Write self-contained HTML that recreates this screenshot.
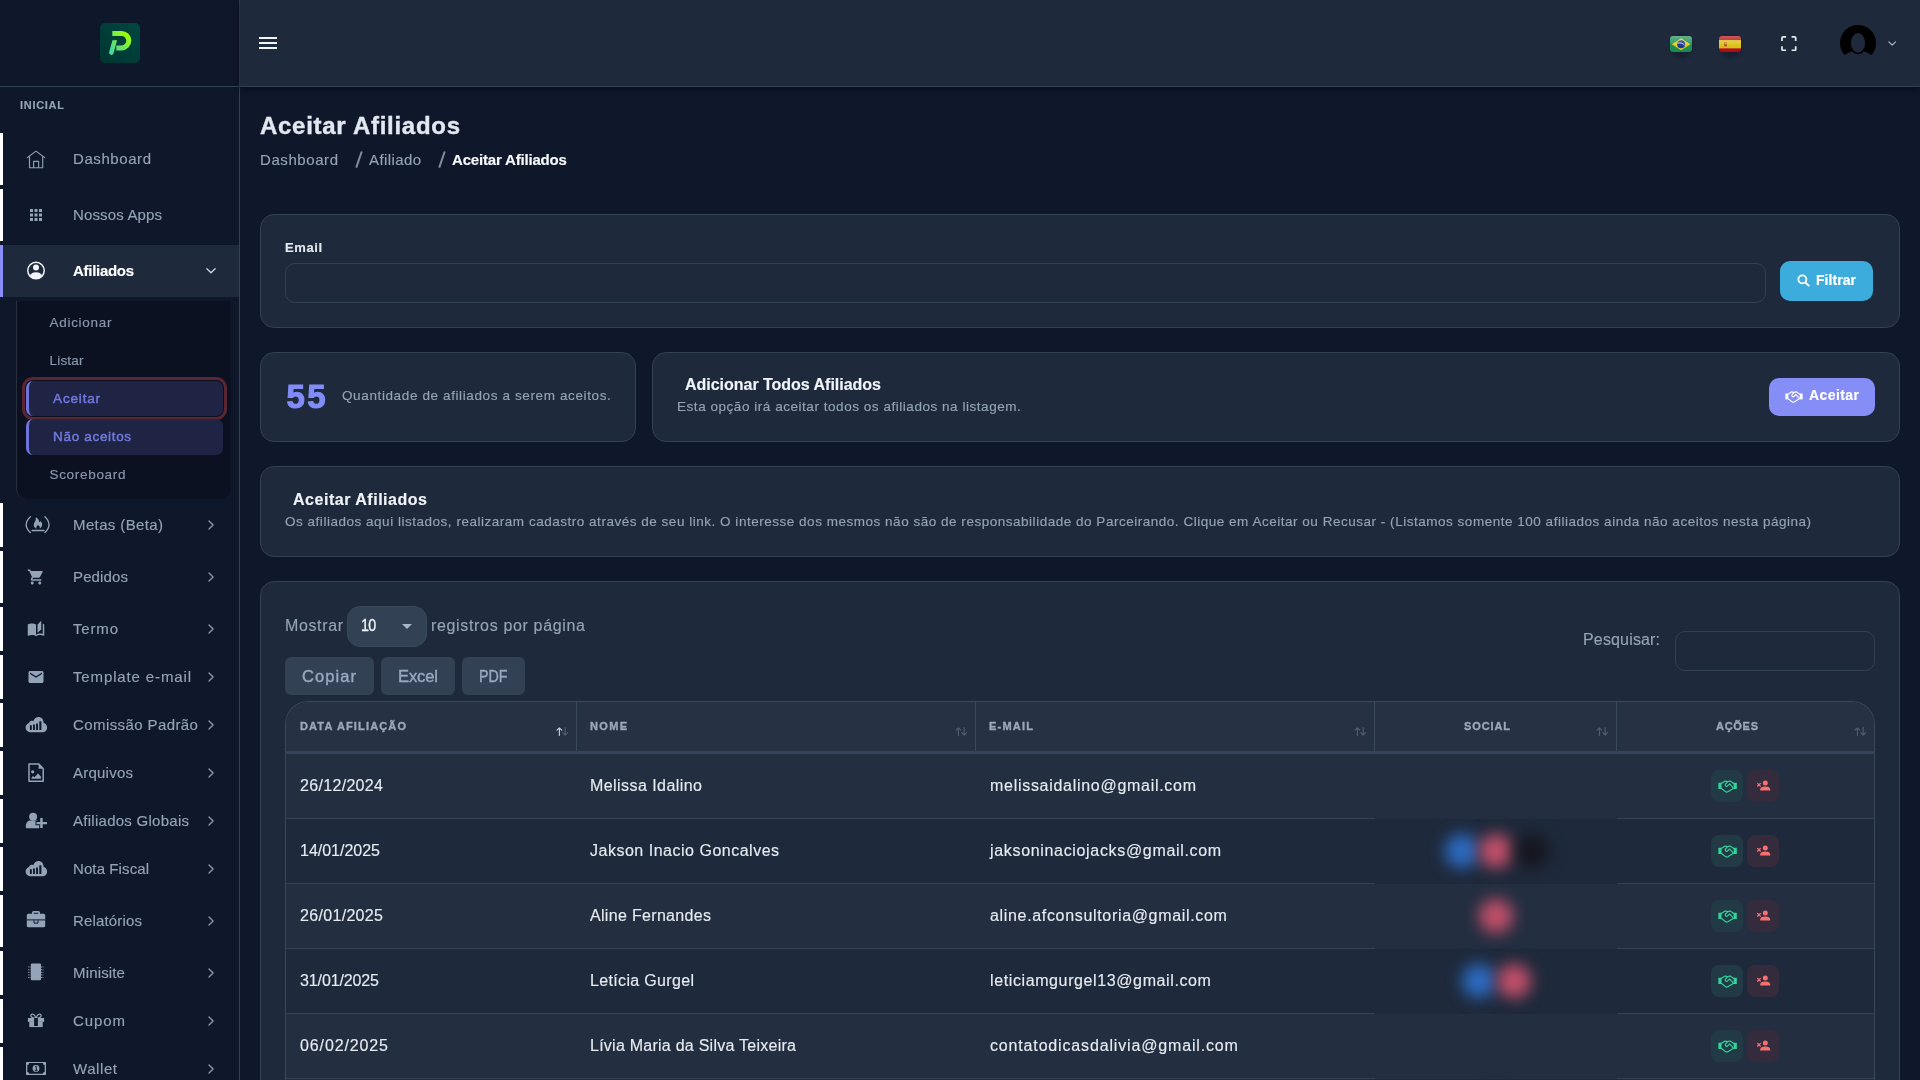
<!DOCTYPE html>
<html lang="pt-BR"><head>
<meta charset="utf-8">
<title>Aceitar Afiliados</title>
<style>
*{box-sizing:border-box;margin:0;padding:0}
html,body{width:1920px;height:1080px;overflow:hidden;background:#0f172a;font-family:"Liberation Sans",sans-serif;color:#94a3b8}
.t{position:absolute;white-space:nowrap;line-height:1}
#side,#head,#main{will-change:transform}
#main{position:absolute;left:0;top:0;width:1920px;height:1080px;overflow:hidden}
body{-webkit-font-smoothing:antialiased;-webkit-text-stroke:.15px}
b,.b{font-weight:bold}
/* sidebar */
#side{position:absolute;left:0;top:0;width:240px;height:1080px;background:#0f172a;border-right:1px solid #334155;overflow:hidden}
#sidehead{position:absolute;left:0;top:0;width:239px;height:87px;border-bottom:1px solid #334155}
#logo{position:absolute;left:100px;top:23px;width:40px;height:40px;border-radius:5px;background:linear-gradient(45deg,#003531,#004740)}
.mi{position:absolute;left:0;width:239px;height:44px;border-left:3px solid #fff}
.mi.h52{height:52px}
.mi.on{border-left-color:#8b8ef9;background:#1e293b}
.mi svg.ic{position:absolute;left:19px;top:50%;width:30px;height:24px;margin-top:-12px;fill:#94a3b8;overflow:visible}
.mi.on svg.ic{fill:#f1f5f9}
.mi .lb{position:absolute;left:70px;top:50%;font-size:15px;line-height:18px;margin-top:-9px;color:#94a3b8;white-space:nowrap}
.mi.on .lb{color:#fff;font-weight:bold}
.mi svg.ch{position:absolute;left:203px;top:50%;width:10px;height:12px;margin-top:-6px;fill:none;stroke:#8796ad;stroke-width:1.35;stroke-linecap:round;stroke-linejoin:round}
.mi.on svg.ch{stroke:#cbd5e1}
#sub{position:absolute;left:16.3px;top:301px;width:214.7px;height:198px;background:#0c1121;border-left:1.5px solid #272f3f;border-radius:0 0 10px 10px}
.si{position:absolute;left:32.2px;margin-top:.7px;font-size:13.5px;line-height:16px;color:#8a98ad;white-space:nowrap}
.sa{position:absolute;left:9px;width:197px;height:35px;background:#1f2444;border-left:3px solid #6d75d8;border-radius:7px}
.sa span{position:absolute;left:23.8px;top:9.8px;font-size:13.5px;line-height:16px;color:#7279de;-webkit-text-stroke:.45px #7279de;white-space:nowrap}
/* header */
#head{position:absolute;left:240px;top:0;width:1680px;height:87px;background:#1e293b;border-bottom:1px solid #334155;box-shadow:0 2px 5px rgba(2,6,23,.55)}
/* cards */
.card{position:absolute;background:#1e293b;border:1px solid #334155;border-radius:14px}
.inp{position:absolute;border:1px solid #334155;border-radius:10px;background:#1e293b}
.btn{position:absolute;border-radius:10px;color:#fff;font-weight:bold;font-size:14px}
.dtb{position:absolute;top:657px;height:38px;border-radius:6px;background:#334155;color:#9aa9bd;font-size:16.5px;-webkit-text-stroke:.4px #9aa9bd}

#tbl{position:absolute;left:285px;top:701px;width:1590px;height:400px;border:1px solid #3a485d;border-bottom:0;border-radius:23px 23px 0 0;overflow:hidden;background:#1e293b}
#thead{position:absolute;left:0;top:0;width:1588px;height:52px;background:#263143;border-bottom:3px solid #35445a}
.th{position:absolute;top:0;height:49px;border-right:1px solid #3a485d}
.th .t{top:18.5px;font-size:11px;font-weight:bold;color:#9aa8bc;-webkit-text-stroke:.35px #9aa8bc}
.th svg{position:absolute;right:7.5px;top:25.2px;width:13px;height:8.9px}
.tr{position:absolute;left:0;width:1588px;height:65px;border-bottom:1px solid #334155;background:#1e293b}
.tr.odd{background:#232e41}
.tr .t{top:24.3px;font-size:16px;color:#e6ebf2;-webkit-text-stroke:.15px #e6ebf2}
.soc{position:absolute;left:1089px;top:0;width:242px;height:65px;background:inherit}
.soc i{position:absolute;top:15px;width:34px;height:34px;border-radius:50%;filter:blur(8px)}
.ba{position:absolute;top:16px;width:32px;height:32px;border-radius:8px}
.ba.g{left:1425px;background:#213a46}
.ba.r{left:1461px;background:#342b3c}
.ba svg{position:absolute;left:7px;top:7px;width:18px;height:18px}
</style>
</head>
<body>
<div id="side">
  <div id="sidehead"><div id="logo"><svg viewBox="0 0 40 40" style="position:absolute;left:0;top:0;width:40px;height:40px"><defs><linearGradient id="lg" gradientUnits="userSpaceOnUse" x1="9" y1="31" x2="28" y2="11"><stop offset="0" stop-color="#39d6ae"></stop><stop offset=".55" stop-color="#6fe85a"></stop><stop offset="1" stop-color="#a2ff00"></stop></linearGradient></defs><path d="M12.3 10.5H21.6a7.2 7.2 0 0 1 0 14.4H16.3" fill="none" stroke="url(#lg)" stroke-width="5"></path><path d="M12.5 17.3H17.1L13.5 30.5a2.3 2.3 0 0 1-4.4-1.2Z" fill="url(#lg)"></path></svg></div></div>
  <div class="t b" style="left: 20px; top: 100px; font-size: 11px; color: rgb(148, 163, 184); letter-spacing: 0.71px;">INICIAL</div>

  <div class="mi h52" style="top:133px"><svg class="ic" viewBox="0 0 30 24"><g fill="none" stroke="#8fa0b7" stroke-width="1.15" stroke-linejoin="round" stroke-linecap="round"><path d="M5.3 10.6 14 4.1l8.7 6.5"></path><path d="M7.5 9.6v11.1h13.2V9.6"></path><path d="M11.6 20.6v-6.3h5v6.3"></path></g></svg><span class="lb" style="letter-spacing: 0.58px;">Dashboard</span></div>
  <div class="mi h52" style="top:189px"><svg class="ic" viewBox="0 0 30 24"><g transform="translate(5 3) scale(.75)"><path d="M4 8h4V4H4v4zm6 12h4v-4h-4v4zm-6 0h4v-4H4v4zm0-6h4v-4H4v4zm6 0h4v-4h-4v4zm6-10v4h4V4h-4zm-6 4h4V4h-4v4zm6 6h4v-4h-4v4zm0 6h4v-4h-4v4z"></path></g></svg><span class="lb" style="letter-spacing: 0.15px;">Nossos Apps</span></div>
  <div class="mi h52 on" style="top:245px"><svg class="ic" viewBox="0 0 30 24"><circle cx="14" cy="11.6" r="8.250" fill="none" stroke="#f1f5f9" stroke-width="1.5"></circle><circle cx="14" cy="8.6" r="3"></circle><path d="M7.9 16.9C8.9 14.4 11 13.3 14 13.3s5.1 1.1 6.1 3.6C18.7 18.8 16.5 19.9 14 19.9s-4.7-1.1-6.1-3z"></path></svg><span class="lb" style="letter-spacing: -0.29px;">Afiliados</span><svg class="ch" viewBox="0 0 12 8" style="width:12px;height:8px;margin-top:-4px;left:202px"><path d="M1.9 1.7 6 5.8 10.1 1.7"></path></svg></div>

  <div id="sub">
    <div class="si" style="top: 13px; letter-spacing: 0.71px;">Adicionar</div>
    <div class="si" style="top: 51px; letter-spacing: 0.2px;">Listar</div>
    <div class="sa" style="top:80px;box-shadow:0 0 0 1px #0b1120,0 0 0 4px #5b2634"><span style="letter-spacing: 0.83px;">Aceitar</span></div>
    <div class="sa" style="top:118.4px;height:35.6px"><span style="letter-spacing: 0.67px;">Não aceitos</span></div>
    <div class="si" style="top: 165px; letter-spacing: 0.69px;">Scoreboard</div>
  </div>

  <div class="mi" style="top:503px"><svg class="ic" viewBox="0 0 30 24"><g fill="none" stroke="#94a3b8" stroke-width="1.350" stroke-linecap="round"><path d="M8.4 3.8Q0 11.6 8.4 19.5"></path><path d="M22.9 3.8Q31.1 11.6 22.9 19.5"></path><path d="M10.2 17.6H21.9" stroke-width="1.5"></path></g><path d="M13.6 4.3C16.5 5.5 17 7.5 17.2 9.2C17.8 8.8 18.2 8.4 18.4 7.9C19.8 9.2 20.3 10.6 20.1 12C19.9 13.6 19 14.8 17.7 15.5C18.2 14.2 17.6 12.8 15.9 11.9C14.6 12.9 13.9 14.3 14.5 15.7C12.8 15.1 11.7 13.6 11.8 11.8C11.9 9.6 14.6 7.6 13.6 4.3Z"></path></svg><span class="lb" style="letter-spacing: 0.38px;">Metas (Beta)</span><svg class="ch" viewBox="0 0 10 12"><path d="M3 1.9 7.1 6 3 10.1"></path></svg></div>
  <div class="mi h52" style="top:551px"><svg class="ic" viewBox="0 0 30 24"><g transform="translate(5 3) scale(.75)"><path d="M7 18c-1.1 0-1.990.9-1.990 2S5.9 22 7 22s2-.9 2-2-.9-2-2-2zM1 2v2h2l3.6 7.590-1.350 2.450c-.16.280-.250.610-.250.960 0 1.1.9 2 2 2h12v-2H7.420c-.14 0-.250-.110-.250-.250l.030-.120.9-1.630h7.450c.750 0 1.410-.410 1.750-1.030l3.580-6.490c.080-.140.120-.310.120-.480 0-.550-.450-1-1-1H5.210l-.940-2H1zm16 16c-1.1 0-1.990.9-1.990 2s.890 2 1.990 2 2-.9 2-2-.9-2-2-2z"></path></g></svg><span class="lb" style="letter-spacing: 0.13px;">Pedidos</span><svg class="ch" viewBox="0 0 10 12"><path d="M3 1.9 7.1 6 3 10.1"></path></svg></div>
  <div class="mi" style="top:607px"><svg class="ic" viewBox="0 0 30 24"><g transform="translate(5 3) scale(.75)"><path d="M19 1l-5 5v11l5-4.5V1zM1 6v14.650c0 .250.250.5.5.5.1 0 .150-.050.250-.050C3.1 20.450 5.050 20 6.5 20c1.950 0 4.050.4 5.5 1.5V6c-1.450-1.1-3.550-1.5-5.5-1.5S2.450 4.9 1 6zm22 13.5V6c-.6-.450-1.250-.750-2-1v13.5c-1.1-.350-2.3-.5-3.5-.5-1.7 0-4.150.650-5.5 1.5v2c1.350-.850 3.8-1.5 5.5-1.5 1.650 0 3.350.3 4.750 1.050.1.050.150.050.250.050.250 0 .5-.250.5-.5v-1.1z"></path></g></svg><span class="lb" style="letter-spacing: 0.83px;">Termo</span><svg class="ch" viewBox="0 0 10 12"><path d="M3 1.9 7.1 6 3 10.1"></path></svg></div>
  <div class="mi" style="top:655px"><svg class="ic" viewBox="0 0 30 24"><g transform="translate(5 3) scale(.75)"><path d="M20 4H4c-1.1 0-1.990.9-1.990 2L2 18c0 1.1.9 2 2 2h16c1.1 0 2-.9 2-2V6c0-1.1-.9-2-2-2zm0 4l-8 5-8-5V6l8 5 8-5v2z"></path></g></svg><span class="lb" style="letter-spacing: 0.87px;">Template e-mail</span><svg class="ch" viewBox="0 0 10 12"><path d="M3 1.9 7.1 6 3 10.1"></path></svg></div>
  <div class="mi" style="top:703px"><svg class="ic" viewBox="0 0 30 24"><path d="M8.2 19.3C5.4 19.3 3.6 17.2 3.6 14.6C3.6 12.3 5.1 10.6 7 10C7.2 8.6 8.6 7.4 10.2 7.7C10.7 7.8 11 8 11.2 8.2C12.1 5.7 14 4 16.3 4C19.6 4 21.8 6.6 21.5 9.7C23.7 10.2 25.1 12.2 25.1 14.5C25.1 17.2 23.1 19.3 20.5 19.3Z"></path><g fill="#0f172a"><rect x="7.9" y="12.2" width="1.9" height="4.8"></rect><rect x="11" y="11.5" width="1.9" height="5.5"></rect><rect x="14.1" y="10.5" width="1.9" height="6.5"></rect><rect x="17.3" y="8.3" width="2.1" height="8.7"></rect></g></svg><span class="lb" style="letter-spacing: 0.41px;">Comissão Padrão</span><svg class="ch" viewBox="0 0 10 12"><path d="M3 1.9 7.1 6 3 10.1"></path></svg></div>
  <div class="mi" style="top:751px"><svg class="ic" viewBox="0 0 30 24"><path d="M7 3.1H16.8L21.2 7.5V20.2H7Z" fill="none" stroke="#94a3b8" stroke-width="1.5" stroke-linejoin="round"></path><path d="M16.6 3.3 21 7.7H16.6Z"></path><circle cx="10.7" cy="10.8" r="1.6"></circle><path d="M9.1 17.8 10.8 14.9 12.5 16.3 16 12.5 18.9 15.5V17.8Z"></path></svg><span class="lb" style="letter-spacing: 0.23px;">Arquivos</span><svg class="ch" viewBox="0 0 10 12"><path d="M3 1.9 7.1 6 3 10.1"></path></svg></div>
  <div class="mi" style="top:799px"><svg class="ic" viewBox="0 0 30 24"><circle cx="11.1" cy="7.7" r="3.950"></circle><path d="M3.8 17C3.8 13.5 6 11.5 8.5 11.5H13.7C16.2 11.5 18.4 13.5 18.4 17V18C18.4 18.8 17.8 19.3 17.1 19.3H5.1C4.4 19.3 3.8 18.8 3.8 18Z"></path><path d="M14.5 12.9H18.2V9H20.7V12.9H25V15.2H20.7V19.1H18.2V15.2H14.5Z" stroke="#0f172a" stroke-width="2" paint-order="stroke"></path></svg><span class="lb" style="letter-spacing: 0.27px;">Afiliados Globais</span><svg class="ch" viewBox="0 0 10 12"><path d="M3 1.9 7.1 6 3 10.1"></path></svg></div>
  <div class="mi" style="top:847px"><svg class="ic" viewBox="0 0 30 24"><path d="M8.2 19.3C5.4 19.3 3.6 17.2 3.6 14.6C3.6 12.3 5.1 10.6 7 10C7.2 8.6 8.6 7.4 10.2 7.7C10.7 7.8 11 8 11.2 8.2C12.1 5.7 14 4 16.3 4C19.6 4 21.8 6.6 21.5 9.7C23.7 10.2 25.1 12.2 25.1 14.5C25.1 17.2 23.1 19.3 20.5 19.3Z"></path><g fill="#0f172a"><rect x="7.9" y="12.2" width="1.9" height="4.8"></rect><rect x="11" y="11.5" width="1.9" height="5.5"></rect><rect x="14.1" y="10.5" width="1.9" height="6.5"></rect><rect x="17.3" y="8.3" width="2.1" height="8.7"></rect></g></svg><span class="lb" style="letter-spacing: 0.1px;">Nota Fiscal</span><svg class="ch" viewBox="0 0 10 12"><path d="M3 1.9 7.1 6 3 10.1"></path></svg></div>
  <div class="mi h52" style="top:895px"><svg class="ic" viewBox="0 0 30 24"><path d="M10.8 5.2V3.7Q10.8 2.8 11.7 2.8H16.3Q17.2 2.8 17.2 3.7V5.2" fill="none" stroke="#94a3b8" stroke-width="1.7"></path><rect x="4.8" y="4.8" width="18.4" height="13.5" rx="1.6"></rect><rect x="4.8" y="10.4" width="18.4" height="1" fill="#0f172a"></rect><path d="M12 11.2V14.1H16V11.2" fill="none" stroke="#0f172a" stroke-width="1"></path></svg><span class="lb" style="letter-spacing: 0.16px;">Relatórios</span><svg class="ch" viewBox="0 0 10 12"><path d="M3 1.9 7.1 6 3 10.1"></path></svg></div>
  <div class="mi" style="top:951px"><svg class="ic" viewBox="0 0 30 24"><rect x="8.8" y="2.4" width="10.2" height="16.9" rx="1.1"></rect><g stroke="#94a3b8" stroke-width="1" stroke-dasharray="1 .5" opacity=".85"><path d="M6 6H8.8M6 8.7H8.8M6 11.3H8.8M6 13.9H8.8M6 16.5H8.8M19 6H22M19 8.7H22M19 11.3H22M19 13.9H22M19 16.5H22"></path></g></svg><span class="lb" style="letter-spacing: 0.16px;">Minisite</span><svg class="ch" viewBox="0 0 10 12"><path d="M3 1.9 7.1 6 3 10.1"></path></svg></div>
  <div class="mi" style="top:999px"><svg class="ic" viewBox="0 0 30 24"><g fill="none" stroke="#94a3b8" stroke-width="1.3" stroke-linejoin="round"><path d="M14 9.2C11.8 9.2 9 8.7 8.9 6.8 8.8 5.3 10.5 4.6 11.7 5.5 12.9 6.4 13.6 7.8 14 9.2Z"></path><path d="M14 9.2C16.2 9.2 19 8.7 19.1 6.8 19.2 5.3 17.5 4.6 16.3 5.5 15.1 6.4 14.4 7.8 14 9.2Z"></path></g><rect x="5.9" y="9" width="16.2" height="3.9"></rect><rect x="7.3" y="12.8" width="13.4" height="5.3"></rect><rect x="12.1" y="9" width="3.8" height="8" fill="#0f172a"></rect></svg><span class="lb" style="letter-spacing: 0.91px;">Cupom</span><svg class="ch" viewBox="0 0 10 12"><path d="M3 1.9 7.1 6 3 10.1"></path></svg></div>
  <div class="mi" style="top:1047px"><svg class="ic" viewBox="0 0 30 24"><rect x="4" y="4.9" width="20" height="13.1" rx=".6"></rect><path d="M7.2 6.1H20.8A1.9 1.9 0 0 0 22.7 8V14.9A1.9 1.9 0 0 0 20.8 16.8H7.2A1.9 1.9 0 0 0 5.3 14.9V8A1.9 1.9 0 0 0 7.2 6.1Z" fill="#0f172a"></path><circle cx="14" cy="11.450" r="3.4"></circle><path d="M13.1 10 14.3 9.4V13.1M12.8 13.4H15.5" fill="none" stroke="#0f172a" stroke-width="1"></path></svg><span class="lb" style="letter-spacing: 0.57px;">Wallet</span><svg class="ch" viewBox="0 0 10 12"><path d="M3 1.9 7.1 6 3 10.1"></path></svg></div>
</div>
<div id="head">
  <svg style="position:absolute;left:16px;top:31px;width:24px;height:24px" viewBox="0 0 24 24"><path fill="#f1f5f9" d="M3 6h18v2H3zm0 5h18v2H3zm0 5h18v2H3z"></path></svg>
  <!-- flags -->
  <div style="position:absolute;left:1430px;top:35px;width:23px;height:23px;border-radius:50%;background:rgba(8,12,26,.3);filter:blur(1.5px)"></div>
  <div id="fbr" style="position:absolute;left:1430px;top:35.5px;width:22.3px;height:16.5px;border-radius:3px;background:#1f8f57;overflow:hidden">
    <svg viewBox="0 0 22 16" preserveAspectRatio="none" style="position:absolute;left:0;top:0;width:22.3px;height:16.5px"><path d="M11 2.1 20.2 8 11 13.9 1.8 8z" fill="#e3cd1e"></path><circle cx="11" cy="8" r="3.9" fill="#203a9a"></circle><path d="M7.6 7c2.3-.8 5 0 6.9 1.9" stroke="#cfd8ea" stroke-width=".9" fill="none"></path></svg>
    <div style="position:absolute;left:0;top:0;width:100%;height:100%;background:linear-gradient(180deg,rgba(255,255,255,.3) 0,rgba(255,255,255,.1) 48%,rgba(255,255,255,0) 52%,rgba(0,0,0,.06) 100%)"></div>
  </div>
  <div style="position:absolute;left:1479px;top:35px;width:23px;height:23px;border-radius:50%;background:rgba(8,12,26,.3);filter:blur(1.5px)"></div>
  <div id="fes" style="position:absolute;left:1479px;top:35.5px;width:22.3px;height:16.5px;border-radius:3px;background:#b80d18;overflow:hidden">
    <svg viewBox="0 0 22 16" preserveAspectRatio="none" style="position:absolute;left:0;top:0;width:22.3px;height:16.5px"><rect y="3.950" width="22" height="8.050" fill="#dcc51c"></rect><path d="M5.2 6.2h2.6v3.4q-1.3 1.1-2.6 0z" fill="#b5482a"></path><circle cx="6.9" cy="7.5" r=".7" fill="#e9c9d0"></circle><path d="M3.3 9.9h6.4" stroke="#cf9d2c" stroke-width=".4"></path></svg>
    <div style="position:absolute;left:0;top:0;width:100%;height:100%;background:linear-gradient(180deg,rgba(255,255,255,.3) 0,rgba(255,255,255,.1) 48%,rgba(255,255,255,0) 52%,rgba(0,0,0,.06) 100%)"></div>
  </div>
  <svg style="position:absolute;left:1541px;top:35.7px;width:15.7px;height:15.3px" viewBox="0 0 16 16" preserveAspectRatio="none" fill="none" stroke="#e2e8f0" stroke-width="1.8" stroke-linejoin="round"><path d="M1 5.2V2.2Q1 1 2.2 1H5.2M10.8 1h3Q15 1 15 2.2V5.2M15 10.8v3Q15 15 13.8 15H10.8M5.2 15H2.2Q1 15 1 13.8V10.8"></path></svg>
  <!-- avatar -->
  <svg style="position:absolute;left:1600px;top:25px;width:36px;height:36px;overflow:visible" viewBox="0 0 36 36"><circle cx="18" cy="18" r="18" fill="#000"></circle><path d="M-2 40V31.5L4.2 30.4Q8 27.6 11.5 26.4H24.5Q28 27.6 31.8 30.4L38 31.5V40Z" fill="#1e293b"></path><ellipse cx="18" cy="17.9" rx="8.4" ry="11.3" fill="#000"></ellipse><ellipse cx="18" cy="17.9" rx="7.1" ry="9.8" fill="#1e293b"></ellipse></svg>
  <svg style="position:absolute;left:1648.1px;top:41px;width:8.3px;height:5.1px" viewBox="0 0 9 5.5" fill="none" stroke="#aebacb" stroke-width="1.25" stroke-linecap="round" stroke-linejoin="round"><path d="M.9.9 4.5 4.5 8.1.9"></path></svg>
</div>
<div id="main">
  <div class="t b" style="left: 260px; top: 114px; font-size: 24px; color: rgb(226, 232, 240); -webkit-text-stroke: 0.4px rgb(226, 232, 240); letter-spacing: 0.72px;">Aceitar Afiliados</div>
  <div class="t" style="left: 260px; top: 152px; font-size: 15px; color: rgb(148, 163, 184); letter-spacing: 0.58px;">Dashboard</div>
  <div style="position:absolute;left:357.8px;top:151px;width:1.6px;height:17px;background:#838d9c;transform:rotate(19deg)"></div>
  <div class="t" style="left: 369px; top: 152px; font-size: 15px; color: rgb(148, 163, 184); letter-spacing: 0.4px;">Afiliado</div>
  <div style="position:absolute;left:440.8px;top:151px;width:1.6px;height:17px;background:#838d9c;transform:rotate(19deg)"></div>
  <div class="t b" style="left: 452px; top: 152px; font-size: 15px; color: rgb(248, 250, 252); letter-spacing: -0.18px;">Aceitar Afiliados</div>

  <!-- filter card -->
  <div class="card" style="left:260px;top:214px;width:1640px;height:114px"></div>
  <div class="t b" style="left: 285px; top: 241px; font-size: 13px; color: rgb(226, 232, 240); letter-spacing: 0.58px;">Email</div>
  <div class="inp" style="left:285px;top:263px;width:1481px;height:40px"></div>
  <div class="btn" style="left:1780px;top:261px;width:93px;height:40px;background:#3bacdb">
    <svg style="position:absolute;left:16.5px;top:13px;width:13px;height:13px" viewBox="0 0 14 14" fill="none" stroke="#fff" stroke-width="2" stroke-linecap="round"><circle cx="5.8" cy="5.8" r="4.3"></circle><path d="M9.2 9.2 12.6 12.6"></path></svg>
    <span class="t" style="left: 36px; top: 11.5px; font-size: 14px; letter-spacing: 0.05px;">Filtrar</span>
  </div>

  <!-- count card -->
  <div class="card" style="left:260px;top:352px;width:376px;height:90px"></div>
  <div class="t b" style="left: 286.5px; top: 380px; font-size: 33px; color: rgb(129, 140, 248); -webkit-text-stroke: 1.1px rgb(129, 140, 248); letter-spacing: 2.28px;">55</div>
  <div class="t" style="left: 342px; top: 389px; font-size: 13.5px; color: rgb(148, 163, 184); letter-spacing: 0.62px;">Quantidade de afiliados a serem aceitos.</div>

  <!-- add all card -->
  <div class="card" style="left:652px;top:352px;width:1248px;height:90px"></div>
  <div class="t b" style="left: 685px; top: 377px; font-size: 16px; color: rgb(241, 245, 249); letter-spacing: -0.02px;">Adicionar Todos Afiliados</div>
  <div class="t" style="left: 677px; top: 400px; font-size: 13.5px; color: rgb(148, 163, 184); letter-spacing: 0.54px;">Esta opção irá aceitar todos os afiliados na listagem.</div>
  <div class="btn" style="left:1769px;top:378px;width:106px;height:38px;background:#858df7">
    <svg style="position:absolute;left:15.7px;top:13.2px;width:18px;height:12.6px" viewBox="0 0 20 14"><rect x=".4" y="2.8" width="3.3" height="6.5" stroke="none" fill="#fff"></rect><rect x="16.3" y="2.8" width="3.3" height="6.5" stroke="none" fill="#fff"></rect><path d="M3.7 3.4 7.1 1.1Q8.5.8 10 1.8 11.5.8 12.9 1.1L15 2.6 16.3 3.6M16.3 8.4 10.2 12.2Q9 12.8 7.8 12L3.7 8.7M10 1.8 7.9 3.9Q7.3 5 7.9 5.9 8.5 6.9 9.5 6.5L12.1 3.9 15.4 7.6" fill="none" stroke="#fff" stroke-width="1.250" stroke-linejoin="round" stroke-linecap="round"></path></svg><span class="t" style="left: 40px; top: 10px; font-size: 14px; letter-spacing: 0.42px;">Aceitar</span>
  </div>

  <!-- info card -->
  <div class="card" style="left:260px;top:466px;width:1640px;height:91px"></div>
  <div class="t b" style="left: 293px; top: 492px; font-size: 16px; color: rgb(241, 245, 249); letter-spacing: 0.52px;">Aceitar Afiliados</div>
  <div class="t" style="left: 285px; top: 515px; font-size: 13.5px; color: rgb(148, 163, 184); letter-spacing: 0.52px;">Os afiliados aqui listados, realizaram cadastro através de seu link. O interesse dos mesmos não são de responsabilidade do Parceirando. Clique em Aceitar ou Recusar - (Listamos somente 100 afiliados ainda não aceitos nesta página)</div>

  <!-- table card -->
  <div class="card" style="left:260px;top:581px;width:1640px;height:560px;border-radius:14px 14px 0 0"></div>
  <div class="t" style="left: 285px; top: 618px; font-size: 16px; color: rgb(148, 163, 184); letter-spacing: 0.63px;">Mostrar</div>
  <div style="position:absolute;left:347px;top:606px;width:80px;height:40.5px;border-radius:13px;background:#334155;border:1px solid #3a485e">
    <span class="t" style="left: 12.5px; top: 11px; font-size: 16px; color: rgb(241, 245, 249); -webkit-text-stroke: 0.3px rgb(241, 245, 249); letter-spacing: -0.8px; transform: scaleX(0.895); transform-origin: 0px 0px;">10</span>
    <svg style="position:absolute;left:54px;top:17px;width:10px;height:5px" viewBox="0 0 10 5"><path d="M0 0h10L5 5z" fill="#a9b6c8"></path></svg>
  </div>
  <div class="t" style="left: 431px; top: 618px; font-size: 16px; color: rgb(148, 163, 184); letter-spacing: 0.66px;">registros por página</div>
  <div class="dtb" style="left:285px;width:88.5px"><span class="t" style="left: 17px; top: 10.5px; letter-spacing: 1.08px;">Copiar</span></div>
  <div class="dtb" style="left:381px;width:74px"><span class="t" style="left: 17px; top: 10.5px; letter-spacing: -0.09px;">Excel</span></div>
  <div class="dtb" style="left:462px;width:62.5px"><span class="t" style="left: 17px; top: 10.5px; transform: scaleX(0.864); transform-origin: 0px 0px;">PDF</span></div>
  <div class="t" style="left: 1583px; top: 631.5px; font-size: 16px; color: rgb(148, 163, 184); letter-spacing: 0.16px;">Pesquisar:</div>
  <div class="inp" style="left:1675px;top:631px;width:200px;height:40px"></div>
<div id="tbl">
  <div id="thead">
    <div class="th" style="left:0px;width:291px"><span class="t" style="left: 14px; letter-spacing: 1.15px;">DATA AFILIAÇÃO</span><svg viewBox="0 0 14 10"><path d="M3.5 9.5V1M.8 3.6 3.5.9l2.7 2.7" fill="none" stroke="#c3cddb" stroke-width="1.3" stroke-linecap="round" stroke-linejoin="round"></path><path d="M10 .5V9M7.3 6.4 10 9.1l2.7-2.7" fill="none" stroke="#506077" stroke-width="1.2" stroke-linecap="round" stroke-linejoin="round"></path></svg></div>
    <div class="th" style="left:291px;width:399px"><span class="t" style="left: 13px; letter-spacing: 1.33px;">NOME</span><svg viewBox="0 0 14 10"><path d="M3.5 9.5V1M.8 3.6 3.5.9l2.7 2.7" fill="none" stroke="#506077" stroke-width="1.2" stroke-linecap="round" stroke-linejoin="round"></path><path d="M10 .5V9M7.3 6.4 10 9.1l2.7-2.7" fill="none" stroke="#506077" stroke-width="1.2" stroke-linecap="round" stroke-linejoin="round"></path></svg></div>
    <div class="th" style="left:690px;width:399px"><span class="t" style="left: 13px; letter-spacing: 1.22px;">E-MAIL</span><svg viewBox="0 0 14 10"><path d="M3.5 9.5V1M.8 3.6 3.5.9l2.7 2.7" fill="none" stroke="#506077" stroke-width="1.2" stroke-linecap="round" stroke-linejoin="round"></path><path d="M10 .5V9M7.3 6.4 10 9.1l2.7-2.7" fill="none" stroke="#506077" stroke-width="1.2" stroke-linecap="round" stroke-linejoin="round"></path></svg></div>
    <div class="th" style="left:1089px;width:242px"><span class="t" style="left: 89px; letter-spacing: 0.89px;">SOCIAL</span><svg viewBox="0 0 14 10"><path d="M3.5 9.5V1M.8 3.6 3.5.9l2.7 2.7" fill="none" stroke="#506077" stroke-width="1.2" stroke-linecap="round" stroke-linejoin="round"></path><path d="M10 .5V9M7.3 6.4 10 9.1l2.7-2.7" fill="none" stroke="#506077" stroke-width="1.2" stroke-linecap="round" stroke-linejoin="round"></path></svg></div>
    <div class="th" style="left:1331px;width:257px;border-right:0"><span class="t" style="left: 99px; letter-spacing: 0.72px;">AÇÕES</span><svg viewBox="0 0 14 10"><path d="M3.5 9.5V1M.8 3.6 3.5.9l2.7 2.7" fill="none" stroke="#506077" stroke-width="1.2" stroke-linecap="round" stroke-linejoin="round"></path><path d="M10 .5V9M7.3 6.4 10 9.1l2.7-2.7" fill="none" stroke="#506077" stroke-width="1.2" stroke-linecap="round" stroke-linejoin="round"></path></svg></div>
  </div>
  <div class="tr odd" style="top:52px"><span class="t" style="left: 14px; letter-spacing: 0.32px;">26/12/2024</span><span class="t" style="left: 304px; letter-spacing: 0.44px;">Melissa Idalino</span><span class="t" style="left: 704px; letter-spacing: 0.71px;">melissaidalino@gmail.com</span><div class="soc"></div><div class="ba g"><svg viewBox="0 0 20 14" style="left:6.8px;top:9.8px;width:19.2px;height:13.6px"><rect x=".4" y="2.8" width="3.3" height="6.5" stroke="none" fill="#34d399"></rect><rect x="16.3" y="2.8" width="3.3" height="6.5" stroke="none" fill="#34d399"></rect><path d="M3.7 3.4 7.1 1.1Q8.5.8 10 1.8 11.5.8 12.9 1.1L15 2.6 16.3 3.6M16.3 8.4 10.2 12.2Q9 12.8 7.8 12L3.7 8.7M10 1.8 7.9 3.9Q7.3 5 7.9 5.9 8.5 6.9 9.5 6.5L12.1 3.9 15.4 7.6" fill="none" stroke="#34d399" stroke-width="1.250" stroke-linejoin="round" stroke-linecap="round"></path></svg></div><div class="ba r"><svg viewBox="0 0 32 32" style="left:0;top:0;width:32px;height:32px"><circle cx="18.3" cy="12.9" r="2.5" fill="#f87171"></circle><path d="M13.2 20.4V19.5Q13.2 16.5 18.2 16.5T23.2 19.5V20.4Z" fill="#f87171"></path><path d="M10.3 13.1 13.7 16.5M13.7 13.1 10.3 16.5" stroke="#f87171" stroke-width="1.3" fill="none"></path></svg></div></div>
  <div class="tr" style="top:117px"><span class="t" style="left: 14px; letter-spacing: -0.01px;">14/01/2025</span><span class="t" style="left: 304px; letter-spacing: 0.51px;">Jakson Inacio Goncalves</span><span class="t" style="left: 704px; letter-spacing: 0.67px;">jaksoninaciojacks@gmail.com</span><div class="soc"><i style="left:70px;background:#2c6cc4"></i><i style="left:104px;background:#c4506b"></i><i style="left:140px;background:#15161d"></i></div><div class="ba g"><svg viewBox="0 0 20 14" style="left:6.8px;top:9.8px;width:19.2px;height:13.6px"><rect x=".4" y="2.8" width="3.3" height="6.5" stroke="none" fill="#34d399"></rect><rect x="16.3" y="2.8" width="3.3" height="6.5" stroke="none" fill="#34d399"></rect><path d="M3.7 3.4 7.1 1.1Q8.5.8 10 1.8 11.5.8 12.9 1.1L15 2.6 16.3 3.6M16.3 8.4 10.2 12.2Q9 12.8 7.8 12L3.7 8.7M10 1.8 7.9 3.9Q7.3 5 7.9 5.9 8.5 6.9 9.5 6.5L12.1 3.9 15.4 7.6" fill="none" stroke="#34d399" stroke-width="1.250" stroke-linejoin="round" stroke-linecap="round"></path></svg></div><div class="ba r"><svg viewBox="0 0 32 32" style="left:0;top:0;width:32px;height:32px"><circle cx="18.3" cy="12.9" r="2.5" fill="#f87171"></circle><path d="M13.2 20.4V19.5Q13.2 16.5 18.2 16.5T23.2 19.5V20.4Z" fill="#f87171"></path><path d="M10.3 13.1 13.7 16.5M13.7 13.1 10.3 16.5" stroke="#f87171" stroke-width="1.3" fill="none"></path></svg></div></div>
  <div class="tr odd" style="top:182px"><span class="t" style="left: 14px; letter-spacing: 0.32px;">26/01/2025</span><span class="t" style="left: 304px; letter-spacing: 0.32px;">Aline Fernandes</span><span class="t" style="left: 704px; letter-spacing: 0.67px;">aline.afconsultoria@gmail.com</span><div class="soc"><i style="left:104px;background:#c4506b"></i></div><div class="ba g"><svg viewBox="0 0 20 14" style="left:6.8px;top:9.8px;width:19.2px;height:13.6px"><rect x=".4" y="2.8" width="3.3" height="6.5" stroke="none" fill="#34d399"></rect><rect x="16.3" y="2.8" width="3.3" height="6.5" stroke="none" fill="#34d399"></rect><path d="M3.7 3.4 7.1 1.1Q8.5.8 10 1.8 11.5.8 12.9 1.1L15 2.6 16.3 3.6M16.3 8.4 10.2 12.2Q9 12.8 7.8 12L3.7 8.7M10 1.8 7.9 3.9Q7.3 5 7.9 5.9 8.5 6.9 9.5 6.5L12.1 3.9 15.4 7.6" fill="none" stroke="#34d399" stroke-width="1.250" stroke-linejoin="round" stroke-linecap="round"></path></svg></div><div class="ba r"><svg viewBox="0 0 32 32" style="left:0;top:0;width:32px;height:32px"><circle cx="18.3" cy="12.9" r="2.5" fill="#f87171"></circle><path d="M13.2 20.4V19.5Q13.2 16.5 18.2 16.5T23.2 19.5V20.4Z" fill="#f87171"></path><path d="M10.3 13.1 13.7 16.5M13.7 13.1 10.3 16.5" stroke="#f87171" stroke-width="1.3" fill="none"></path></svg></div></div>
  <div class="tr" style="top:247px"><span class="t" style="left: 14px; letter-spacing: -0.12px;">31/01/2025</span><span class="t" style="left: 304px; letter-spacing: 0.34px;">Letícia Gurgel</span><span class="t" style="left: 704px; letter-spacing: 0.61px;">leticiamgurgel13@gmail.com</span><div class="soc"><i style="left:87px;background:#2c6cc4"></i><i style="left:122px;background:#c4506b"></i></div><div class="ba g"><svg viewBox="0 0 20 14" style="left:6.8px;top:9.8px;width:19.2px;height:13.6px"><rect x=".4" y="2.8" width="3.3" height="6.5" stroke="none" fill="#34d399"></rect><rect x="16.3" y="2.8" width="3.3" height="6.5" stroke="none" fill="#34d399"></rect><path d="M3.7 3.4 7.1 1.1Q8.5.8 10 1.8 11.5.8 12.9 1.1L15 2.6 16.3 3.6M16.3 8.4 10.2 12.2Q9 12.8 7.8 12L3.7 8.7M10 1.8 7.9 3.9Q7.3 5 7.9 5.9 8.5 6.9 9.5 6.5L12.1 3.9 15.4 7.6" fill="none" stroke="#34d399" stroke-width="1.250" stroke-linejoin="round" stroke-linecap="round"></path></svg></div><div class="ba r"><svg viewBox="0 0 32 32" style="left:0;top:0;width:32px;height:32px"><circle cx="18.3" cy="12.9" r="2.5" fill="#f87171"></circle><path d="M13.2 20.4V19.5Q13.2 16.5 18.2 16.5T23.2 19.5V20.4Z" fill="#f87171"></path><path d="M10.3 13.1 13.7 16.5M13.7 13.1 10.3 16.5" stroke="#f87171" stroke-width="1.3" fill="none"></path></svg></div></div>
  <div class="tr odd" style="top:312px"><span class="t" style="left: 14px; letter-spacing: 0.88px;">06/02/2025</span><span class="t" style="left: 304px; letter-spacing: 0.25px;">Lívia Maria da Silva Teixeira</span><span class="t" style="left: 704px; letter-spacing: 0.84px;">contatodicasdalivia@gmail.com</span><div class="soc"></div><div class="ba g"><svg viewBox="0 0 20 14" style="left:6.8px;top:9.8px;width:19.2px;height:13.6px"><rect x=".4" y="2.8" width="3.3" height="6.5" stroke="none" fill="#34d399"></rect><rect x="16.3" y="2.8" width="3.3" height="6.5" stroke="none" fill="#34d399"></rect><path d="M3.7 3.4 7.1 1.1Q8.5.8 10 1.8 11.5.8 12.9 1.1L15 2.6 16.3 3.6M16.3 8.4 10.2 12.2Q9 12.8 7.8 12L3.7 8.7M10 1.8 7.9 3.9Q7.3 5 7.9 5.9 8.5 6.9 9.5 6.5L12.1 3.9 15.4 7.6" fill="none" stroke="#34d399" stroke-width="1.250" stroke-linejoin="round" stroke-linecap="round"></path></svg></div><div class="ba r"><svg viewBox="0 0 32 32" style="left:0;top:0;width:32px;height:32px"><circle cx="18.3" cy="12.9" r="2.5" fill="#f87171"></circle><path d="M13.2 20.4V19.5Q13.2 16.5 18.2 16.5T23.2 19.5V20.4Z" fill="#f87171"></path><path d="M10.3 13.1 13.7 16.5M13.7 13.1 10.3 16.5" stroke="#f87171" stroke-width="1.3" fill="none"></path></svg></div></div>
  <div class="tr" style="top:377px"><div class="soc"><i style="left:104px;background:#c4506b"></i></div><div class="ba g"><svg viewBox="0 0 20 14" style="left:6.8px;top:9.8px;width:19.2px;height:13.6px"><rect x=".4" y="2.8" width="3.3" height="6.5" stroke="none" fill="#34d399"></rect><rect x="16.3" y="2.8" width="3.3" height="6.5" stroke="none" fill="#34d399"></rect><path d="M3.7 3.4 7.1 1.1Q8.5.8 10 1.8 11.5.8 12.9 1.1L15 2.6 16.3 3.6M16.3 8.4 10.2 12.2Q9 12.8 7.8 12L3.7 8.7M10 1.8 7.9 3.9Q7.3 5 7.9 5.9 8.5 6.9 9.5 6.5L12.1 3.9 15.4 7.6" fill="none" stroke="#34d399" stroke-width="1.250" stroke-linejoin="round" stroke-linecap="round"></path></svg></div><div class="ba r"><svg viewBox="0 0 32 32" style="left:0;top:0;width:32px;height:32px"><circle cx="18.3" cy="12.9" r="2.5" fill="#f87171"></circle><path d="M13.2 20.4V19.5Q13.2 16.5 18.2 16.5T23.2 19.5V20.4Z" fill="#f87171"></path><path d="M10.3 13.1 13.7 16.5M13.7 13.1 10.3 16.5" stroke="#f87171" stroke-width="1.3" fill="none"></path></svg></div></div>
</div>
</div>


</body></html>
